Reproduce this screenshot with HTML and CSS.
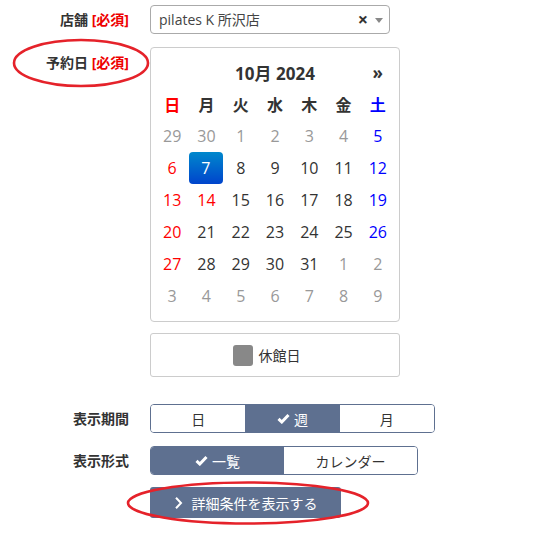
FILE: index.html
```html
<!DOCTYPE html>
<html lang="ja">
<head>
<meta charset="utf-8">
<link rel="stylesheet" href="styles.css">
</head>
<body>
<div class="form">
  <div class="row row-shop">
    <div class="label">店舗 <span class="req">[必須]</span></div>
    <div class="select">
      <span class="select-text">pilates K 所沢店</span>
      <span class="select-clear">×</span>
      <span class="select-arrow"></span>
    </div>
  </div>

  <div class="row row-date">
    <div class="label label-date">予約日 <span class="req">[必須]</span></div>
    <div class="control">
      <div class="cal">
        <div class="cal-head">
          <span class="cal-prev"></span>
          <span class="cal-title">10月 2024</span>
          <span class="cal-next">»</span>
        </div>
        <div class="cal-grid">
          <span class="dow sun">日</span><span class="dow">月</span><span class="dow">火</span><span class="dow">水</span><span class="dow">木</span><span class="dow">金</span><span class="dow sat">土</span>
          <span class="d old">29</span><span class="d old">30</span><span class="d old">1</span><span class="d old">2</span><span class="d old">3</span><span class="d old">4</span><span class="d sat">5</span>
          <span class="d sun">6</span><span class="d active">7</span><span class="d">8</span><span class="d">9</span><span class="d">10</span><span class="d">11</span><span class="d sat">12</span>
          <span class="d sun">13</span><span class="d sun">14</span><span class="d">15</span><span class="d">16</span><span class="d">17</span><span class="d">18</span><span class="d sat">19</span>
          <span class="d sun">20</span><span class="d">21</span><span class="d">22</span><span class="d">23</span><span class="d">24</span><span class="d">25</span><span class="d sat">26</span>
          <span class="d sun">27</span><span class="d">28</span><span class="d">29</span><span class="d">30</span><span class="d">31</span><span class="d old">1</span><span class="d old">2</span>
          <span class="d old">3</span><span class="d old">4</span><span class="d old">5</span><span class="d old">6</span><span class="d old">7</span><span class="d old">8</span><span class="d old">9</span>
        </div>
      </div>
      <div class="legend">
        <span class="legend-box"></span>
        <span class="legend-text">休館日</span>
      </div>
    </div>
  </div>

  <div class="row row-period">
    <div class="label">表示期間</div>
    <div class="btn-group group-period">
      <span class="btn">日</span>
      <span class="btn on"><svg class="check" width="13" height="11" viewBox="0 0 13 11"><path d="M1.5 5.8 L4.8 9 L11.5 2" fill="none" stroke="#fff" stroke-width="3"/></svg>週</span>
      <span class="btn">月</span>
    </div>
  </div>

  <div class="row row-format">
    <div class="label">表示形式</div>
    <div class="btn-group group-format">
      <span class="btn on"><svg class="check" width="13" height="11" viewBox="0 0 13 11"><path d="M1.5 5.8 L4.8 9 L11.5 2" fill="none" stroke="#fff" stroke-width="3"/></svg>一覧</span>
      <span class="btn">カレンダー</span>
    </div>
  </div>

  <div class="row row-detail">
    <div class="label"></div>
    <span class="detail-btn"><svg class="chev" width="9" height="14" viewBox="0 0 9 14"><path d="M2 1.8 L7 7 L2 12.2" fill="none" stroke="#fff" stroke-width="2"/></svg>詳細条件を表示する</span>
  </div>
</div>

<svg class="marks" width="547" height="534" viewBox="0 0 547 534">
  <ellipse cx="81" cy="63" rx="67" ry="23" fill="none" stroke="#e5222a" stroke-width="2.6"/>
  <ellipse cx="248" cy="503" rx="120" ry="20.5" fill="none" stroke="#e5222a" stroke-width="2.6"/>
</svg>
</body>
</html>
```

FILE: styles.css
```css
* { box-sizing: border-box; }
html, body {
  margin: 0;
  padding: 0;
  background: #fff;
}
body {
  font-family: "Open Sans", "Noto Sans CJK JP", sans-serif;
  color: #333;
  width: 547px;
  height: 534px;
  overflow: hidden;
  position: relative;
}
.form {
  padding-top: 5px;
  display: flex;
  flex-direction: column;
}
.row {
  display: flex;
  align-items: flex-start;
}
.label {
  width: 130px;
  padding-right: 1px;
  margin-right: 20px;
  text-align: right;
  font-weight: bold;
  font-size: 14px;
  line-height: 29px;
  color: #333;
  white-space: nowrap;
}
.req { color: #e00; }

/* select */
.select {
  width: 240px;
  height: 29px;
  border: 1px solid #aaa;
  border-radius: 4px;
  display: flex;
  align-items: center;
  padding-left: 8px;
  font-size: 14px;
  color: #444;
}
.select-text { flex: 1; line-height: 27px; }
.select-clear {
  font-weight: bold;
  font-size: 18px;
  color: #333;
  margin-right: 7px;
  line-height: 27px;
}
.select-arrow {
  width: 0;
  height: 0;
  border-left: 4px solid transparent;
  border-right: 4px solid transparent;
  border-top: 5px solid #888;
  margin-right: 6px;
  margin-top: 1px;
}

/* date */
.row-date { margin-top: 13px; }
.label-date { line-height: 32px; }
.control { display: flex; flex-direction: column; gap: 11px; }
.cal {
  width: 250px;
  height: 275px;
  border: 1px solid #ccc;
  border-radius: 4px;
  padding: 8px 4px 0 4px;
}
.cal-head {
  display: grid;
  grid-template-columns: 1fr 5fr 1fr;
  height: 32px;
  align-items: center;
  text-align: center;
}
.cal-title { font-weight: bold; font-size: 17px; color: #333; }
.cal-next { font-weight: bold; font-size: 17px; color: #333; }
.cal-grid {
  display: grid;
  grid-template-columns: repeat(7, 1fr);
  grid-auto-rows: 32px;
  text-align: center;
}
.cal-grid > span {
  display: flex;
  align-items: center;
  justify-content: center;
  font-size: 16px;
}
.dow { font-weight: bold; color: #333; }
.d { color: #333; }
.old { color: #999; }
.sun { color: #f00; }
.sat { color: #00f; }
.cal-grid > .active {
  color: #fff;
  background: linear-gradient(#0088cc, #0044cc);
  border-radius: 4px;
  margin: 0 1px 0 0;
}

.legend {
  width: 250px;
  height: 44px;
  border: 1px solid #ccc;
  border-radius: 3px;
  display: flex;
  align-items: center;
  justify-content: center;
  gap: 6px;
  font-size: 14px;
}
.legend-box {
  width: 20px;
  height: 21px;
  background: #888;
  border-radius: 3px;
}
.legend-text { margin-right: 17px; }

/* button groups */
.row-period { margin-top: 27px; }
.row-format { margin-top: 13px; }
.btn-group {
  display: flex;
  height: 29px;
  border: 1px solid #5e7090;
  border-radius: 4px;
  overflow: hidden;
}
.group-period { width: 285px; }
.group-format { width: 268px; }
.btn {
  flex: 1;
  display: flex;
  align-items: center;
  justify-content: center;
  font-size: 14px;
  color: #333;
  background: #fff;
}
.btn.on {
  background: #5e7090;
  color: #fff;
}
.check { margin-right: 4px; }

.row-detail { margin-top: 12px; }
.detail-btn {
  width: 191px;
  height: 31px;
  background: #5e7090;
  color: #fff;
  font-size: 14px;
  display: flex;
  align-items: center;
  justify-content: center;
  border-radius: 3px;
}
.chev { margin-right: 9px; }

.marks {
  position: absolute;
  left: 0;
  top: 0;
  pointer-events: none;
}
```
